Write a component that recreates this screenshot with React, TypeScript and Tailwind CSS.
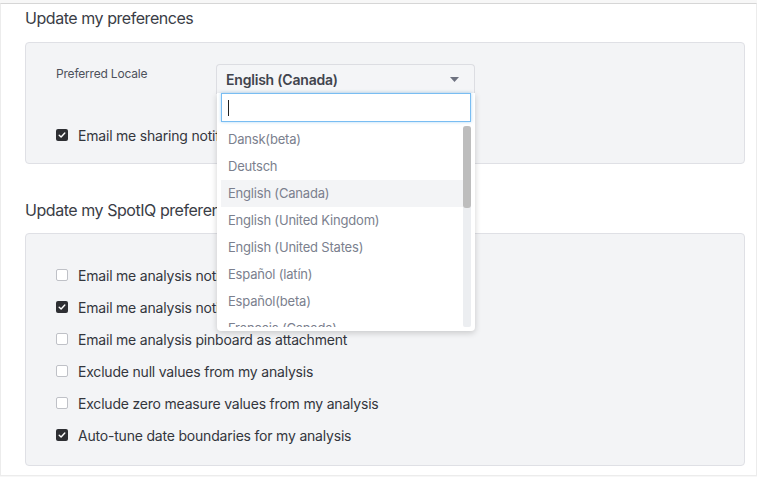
import React from "react"

const locales = [
  "Dansk(beta)",
  "Deutsch",
  "English (Canada)",
  "English (United Kingdom)",
  "English (United States)",
  "Español (latín)",
  "Español(beta)",
  "Français (Canada)",
]

function Checkbox({ checked }: { checked?: boolean }) {
  if (checked) {
    return (
      <span className="flex h-[12px] w-[12px] shrink-0 items-center justify-center rounded-[2px] bg-[#2e2f33]">
        <svg width="8" height="8" viewBox="0 0 8 8" fill="none">
          <path d="M1.2 4.2 3.1 6 6.8 2" stroke="white" strokeWidth="1.4" strokeLinecap="round" strokeLinejoin="round" />
        </svg>
      </span>
    )
  }
  return <span className="h-[12px] w-[12px] shrink-0 rounded-[2px] border border-[#bfc1c7] bg-white" />
}

function CheckRow({ label, checked }: { label: string; checked?: boolean }) {
  return (
    <label className="flex h-[32px] items-center gap-[10px] text-[14px] tracking-[-0.2px] text-[#33363d]">
      <Checkbox checked={checked} />
      <span>{label}</span>
    </label>
  )
}

function LocaleSelect() {
  return (
    <div className="relative h-[30px] w-[259px]">
      <div className="flex h-[30px] items-center justify-between rounded-t-[4px] border border-b-0 border-[#dcdde2] bg-[#f4f5f7] pl-[9px] pr-[15px]">
        <span className="text-[14px] font-semibold tracking-[-0.2px] text-[#41444d]">English (Canada)</span>
        <svg width="9" height="5" viewBox="0 0 9 5">
          <path d="M0 0h9L4.5 5z" fill="#6e7280" />
        </svg>
      </div>
      <div className="absolute left-[1px] top-[29px] z-10 h-[238px] w-[258px] rounded-b-[4px] bg-white px-[4px] shadow-[0_2px_6px_rgba(0,0,0,0.18)]">
        <div className="flex h-[29px] items-center border border-[#79bdf2] bg-white px-[6px] shadow-[0_0_3px_rgba(121,189,242,0.6)]">
          <span className="h-[16px] w-px bg-[#222]" />
        </div>
        <div className="mt-[4px] flex h-[201px] overflow-hidden">
          <ul className="w-[242px]">
            {locales.map((l) => (
              <li
                key={l}
                className={`flex h-[27px] items-center px-[7px] text-[13px] tracking-[-0.2px] text-[#7b7f8e] ${
                  l === "English (Canada)" ? "bg-[#f3f4f6]" : ""
                }`}
              >
                {l}
              </li>
            ))}
          </ul>
          <div className="h-full w-[8px] rounded-[2px] bg-[#eceef1]">
            <div className="h-[82px] w-full rounded-[3px] bg-[#bdbdbd]" />
          </div>
        </div>
      </div>
    </div>
  )
}

export default function App() {
  return (
    <div className="h-[477px] w-[757px] bg-[#f7f7f7] pt-[3px] font-['Inter',sans-serif]">
      <div className="h-[473px] w-[757px] border border-t-[#d6d6d6] border-x-[#ececec] border-b-[#ececec] bg-white pl-[24px] pr-[11px] pt-[2px]">
        <h2 className="h-[24px] text-[16px] leading-[24px] tracking-[-0.45px] text-[#3a3d46]">Update my preferences</h2>
        <section className="mt-[12px] h-[122px] rounded-[4px] border border-[#dfe0e5] bg-[#f3f4f6] pl-[30px] pt-[21px]">
          <div className="flex">
            <span className="mt-[2px] w-[160px] text-[12px] leading-[16px] tracking-[-0.2px] text-[#4d515b]">Preferred Locale</span>
            <LocaleSelect />
          </div>
          <div className="mt-[25px]">
            <CheckRow label="Email me sharing notifications" checked />
          </div>
        </section>
        <h2 className="mt-[34px] h-[24px] text-[16px] leading-[24px] tracking-[-0.45px] text-[#3a3d46]">Update my SpotIQ preferences</h2>
        <section className="mt-[11px] h-[233px] rounded-[4px] border border-[#dfe0e5] bg-[#f3f4f6] pl-[30px] pt-[25px]">
          <CheckRow label="Email me analysis notifications" />
          <CheckRow label="Email me analysis notifications for pinboards" checked />
          <CheckRow label="Email me analysis pinboard as attachment" />
          <CheckRow label="Exclude null values from my analysis" />
          <CheckRow label="Exclude zero measure values from my analysis" />
          <CheckRow label="Auto-tune date boundaries for my analysis" checked />
        </section>
      </div>
    </div>
  )
}
